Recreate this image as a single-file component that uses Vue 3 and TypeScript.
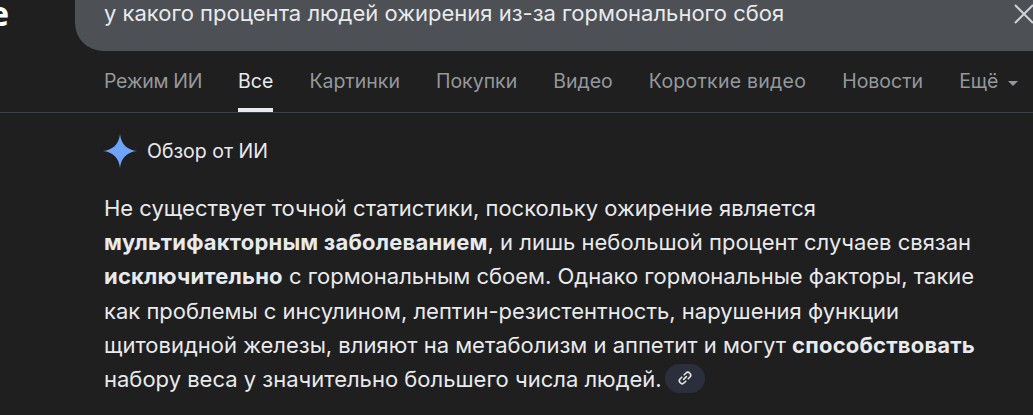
<template>
  <div class="page">
    <header class="top">
      <div class="logo"><span>Google</span></div>
      <div class="search">
        <span class="query">у какого процента людей ожирения из-за гормонального сбоя</span>
        <svg class="clear" width="22" height="22" viewBox="0 0 22 22" fill="none" stroke="#d0d2d2" stroke-width="2">
          <path d="M2 2 L20 20 M20 2 L2 20" />
        </svg>
      </div>
    </header>

    <nav class="tabs">
      <a v-for="tab in tabs" :key="tab" class="tab" :class="{ active: tab === 'Все' }">{{ tab }}</a>
      <a class="tab more">Ещё <span class="caret"></span></a>
    </nav>

    <main class="content">
      <div class="ai-head">
        <svg width="34" height="34" viewBox="0 0 34 34">
          <path d="M17 0 C18 10 24 16 34 17 C24 18 18 24 17 34 C16 24 10 18 0 17 C10 16 16 10 17 0 Z" fill="#6ea5fb" />
        </svg>
        <span>Обзор от ИИ</span>
      </div>
      <p class="answer">
        Не существует точной статистики, поскольку ожирение является
        <b>мультифакторным заболеванием</b>, и лишь небольшой процент случаев связан
        <b>исключительно</b> с гормональным сбоем. Однако гормональные факторы, такие
        как проблемы с инсулином, лептин-резистентность, нарушения функции
        щитовидной железы, влияют на метаболизм и аппетит и могут <b>способствовать</b>
        набору веса у значительно большего числа людей.
        <span class="link-chip">
          <svg width="16" height="16" viewBox="0 0 16 16" fill="none" stroke="#e3e3e3" stroke-width="1.6" stroke-linecap="round">
            <path d="M6.6 9.4 L9.4 6.6" />
            <path d="M7.2 4.8 L8.8 3.2 A2.6 2.6 0 0 1 12.8 7.2 L11.2 8.8" />
            <path d="M8.8 11.2 L7.2 12.8 A2.6 2.6 0 0 1 3.2 8.8 L4.8 7.2" />
          </svg>
        </span>
      </p>
    </main>
  </div>
</template>

<script setup lang="ts">
const tabs: string[] = ['Режим ИИ', 'Все', 'Картинки', 'Покупки', 'Видео', 'Короткие видео', 'Новости']
</script>

<style>
html, body {
  margin: 0;
  background: #1f1f1f;
  overflow: hidden;
}
</style>

<style scoped>
.page {
  width: 1033px;
  height: 415px;
  overflow: hidden;
  background: #1f1f1f;
  color: #e8eaed;
  font-family: Inter, "Noto Sans", sans-serif;
}
.top {
  display: flex;
  height: 51px;
}
.logo {
  flex: none;
  width: 9px;
  margin-right: 66px;
  display: flex;
  justify-content: flex-end;
  overflow: hidden;
  font-family: "Open Sans", sans-serif;
  font-size: 34px;
  font-weight: 700;
  line-height: 26px;
  color: #fff;
}
.search {
  flex: none;
  width: 1000px;
  height: 51px;
  box-sizing: border-box;
  padding: 0 0 0 29px;
  display: flex;
  background: #4d5156;
  border-radius: 0 0 0 28px;
  position: relative;
}
.query {
  font-size: 22px;
  line-height: 27px;
  color: #e8eaed;
  white-space: nowrap;
}
.clear {
  position: absolute;
  left: 938px;
  top: 3px;
}
.tabs {
  display: flex;
  gap: 36px;
  height: 62px;
  box-sizing: border-box;
  padding-left: 104px;
  border-bottom: 1px solid #3c4043;
}
.tab {
  font-size: 19.5px;
  line-height: 60px;
  color: #94989d;
  white-space: nowrap;
  height: 61px;
  box-sizing: border-box;
}
.tab:first-child {
  letter-spacing: -0.3px;
}
.tab:nth-child(6) {
  letter-spacing: 0.25px;
}
.tab.active {
  color: #e8eaed;
  border-bottom: 4px solid #e8eaed;
}
.caret {
  display: inline-block;
  margin-left: 4px;
  vertical-align: 2px;
  border-left: 5px solid transparent;
  border-right: 5px solid transparent;
  border-top: 5px solid #94989d;
}
.content {
  padding: 21px 0 0 103px;
}
.ai-head {
  display: flex;
  align-items: center;
  gap: 10px;
  height: 34px;
  font-size: 19.5px;
  color: #e8eaed;
}
.answer {
  margin: 23px 0 0 1px;
  width: 877px;
  font-size: 22px;
  line-height: 34.2px;
  color: #e8eaed;
}
.answer b {
  font-weight: 700;
  letter-spacing: 0.2px;
}
.link-chip {
  display: inline-flex;
  align-items: center;
  justify-content: center;
  width: 40px;
  height: 29px;
  margin-left: -3px;
  vertical-align: 1px;
  border-radius: 15px;
  background: #2a2f3b;
}
</style>
